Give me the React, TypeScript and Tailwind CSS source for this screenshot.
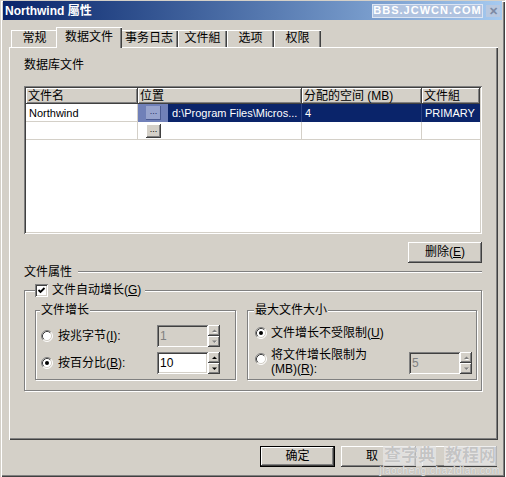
import React from 'react';

const font = "font-['Liberation_Sans','Noto_Sans_CJK_SC',sans-serif]";
const raised =
  'bg-[#d4d0c8] shadow-[inset_-1px_-1px_0_#404040,inset_1px_1px_0_#ffffff,inset_-2px_-2px_0_#808080,inset_2px_2px_0_#d4d0c8]';
const sunken =
  'shadow-[inset_1px_1px_0_#808080,inset_-1px_-1px_0_#ffffff,inset_2px_2px_0_#404040,inset_-2px_-2px_0_#d4d0c8]';
const etched = 'border border-[#808080] shadow-[inset_1px_1px_0_#ffffff,1px_1px_0_#ffffff]';

function Radio({ checked }: { checked?: boolean }) {
  return (
    <svg width="12" height="12" viewBox="0 0 12 12" className="shrink-0">
      <circle cx="6" cy="6" r="5" fill="#ffffff" />
      <path d="M2.11 9.89A5.5 5.5 0 0 1 9.89 2.11" stroke="#808080" fill="none" />
      <path d="M9.89 2.11A5.5 5.5 0 0 1 2.11 9.89" stroke="#ffffff" fill="none" />
      <path d="M2.82 9.18A4.5 4.5 0 0 1 9.18 2.82" stroke="#404040" fill="none" />
      <path d="M9.18 2.82A4.5 4.5 0 0 1 2.82 9.18" stroke="#d4d0c8" fill="none" />
      {checked && <circle cx="6" cy="6" r="2" fill="#000000" />}
    </svg>
  );
}

function Checkbox() {
  return (
    <span className={`w-[13px] h-[13px] bg-white shrink-0 ${sunken}`}>
      <svg width="13" height="13" viewBox="0 0 13 13">
        <path d="M3.5 6 L5.5 8 L9.5 4" stroke="#000000" strokeWidth="1.8" fill="none" />
      </svg>
    </span>
  );
}

function SpinBtn({ up, disabled }: { up?: boolean; disabled?: boolean }) {
  const c = disabled ? '#808080' : '#000000';
  return (
    <div className={`h-[11px] flex items-center justify-center ${raised}`}>
      <svg width="5" height="4" viewBox="0 0 5 4">
        {disabled && <path d={up ? 'M1 4 L3 2 L5 4 Z' : 'M1 1 L5 1 L3 3 Z'} fill="#ffffff" />}
        <path d={up ? 'M0 3 L2.5 0.5 L5 3 Z' : 'M0 0.5 L5 0.5 L2.5 3 Z'} fill={c} />
      </svg>
    </div>
  );
}

function Spin({ value, disabled }: { value: string; disabled?: boolean }) {
  return (
    <div className="flex h-[22px] w-[63px] shrink-0">
      <div
        className={`w-[51px] h-full ${sunken} ${disabled ? 'bg-[#d4d0c8] text-[#808080]' : 'bg-white text-black'} pl-[3px] text-[12px] leading-[22px]`}
      >
        {value}
      </div>
      <div className="flex flex-col w-[12px]">
        <SpinBtn up disabled={disabled} />
        <SpinBtn disabled={disabled} />
      </div>
    </div>
  );
}

function Tab({ label, w, active }: { label: string; w: string; active?: boolean }) {
  if (active) {
    return (
      <div
        className={`${w} h-[21px] -mx-[2px] -mb-[1px] relative z-10 bg-[#d4d0c8] text-center pt-[3px] leading-[14px] shadow-[inset_1px_1px_0_#ffffff,inset_-1px_0_0_#404040,inset_-2px_0_0_#808080]`}
      >
        {label}
      </div>
    );
  }
  return (
    <div
      className={`${w} h-[17px] bg-[#d4d0c8] text-center pt-[1px] leading-[14px] shadow-[inset_1px_1px_0_#ffffff,inset_-1px_0_0_#404040,inset_-2px_0_0_#808080]`}
    >
      {label}
    </div>
  );
}

function GridBtn() {
  return (
    <div className={`w-[15px] h-[14px] ${raised} text-[9px] leading-[10px] text-center text-black`}>...</div>
  );
}

export default function App() {
  return (
    <div className={`${font} text-[12px] text-black w-[505px] h-[477px] relative bg-[#d4d0c8] pt-[1px] px-[3px] shadow-[inset_1px_1px_0_#d4d0c8,inset_2px_2px_0_#ffffff,inset_-1px_-1px_0_#404040,inset_-2px_-2px_0_#808080]`}>
      {/* title bar */}
      <div className="h-[19px] bg-linear-to-r from-[#0a246a] to-[#a6caf0] flex items-center pl-[2px] pr-[2px]">
        <span className="text-white font-bold text-[12px] leading-[14px]">Northwind 屬性</span>
        <div className="ml-auto flex items-center gap-[3px]">
          <div className="h-[14px] w-[111px] bg-[#b0c3e0] border border-[#dce5f3] flex items-center justify-center">
            <span className="text-white font-bold text-[11px] tracking-[1px] leading-[11px]">BBS.JCWCN.COM</span>
          </div>
          <div className="w-[14px] h-[12px] bg-[#b8c8e0] flex items-center justify-center text-[#7c8aa4] text-[11px] leading-[12px] font-bold">
            ✕
          </div>
        </div>
      </div>

      <div className="ml-[6px] mt-[7px] w-[489px]">
        {/* tabs */}
        <div className="flex items-end h-[20px] pl-[2px] relative z-10">
          <Tab label="常规" w="w-[47px]" />
          <Tab label="数据文件" w="w-[66px]" active />
          <Tab label="事务日志" w="w-[58px]" />
          <Tab label="文件組" w="w-[49px]" />
          <Tab label="选项" w="w-[47px]" />
          <Tab label="权限" w="w-[47px]" />
        </div>

        {/* panel */}
        <div className="h-[393px] bg-[#d4d0c8] pl-[15px] pt-[11px] shadow-[inset_1px_1px_0_#ffffff,inset_-1px_-1px_0_#404040,inset_-2px_-2px_0_#808080] flex flex-col w-[489px]">
          <div className="leading-[14px] h-[14px]">数据库文件</div>

          {/* list */}
          <div className={`mt-[14px] w-[458px] h-[148px] bg-white p-[2px] ${sunken}`}>
            <div className="flex h-[16px] leading-[16px]">
              {[
                ['文件名', 'w-[112px]'],
                ['位置', 'w-[164px]'],
                ['分配的空间 (MB)', 'w-[120px]'],
                ['文件組', 'flex-1'],
              ].map(([t, w]) => (
                <div key={t} className={`${w} pl-[2px] ${raised} overflow-hidden whitespace-nowrap`}>
                  {t}
                </div>
              ))}
            </div>
            <div className="flex h-[18px] text-[11px] leading-[18px]">
              <div className="w-[112px] pl-[3px] border-r border-b border-[#d4d0c8]">Northwind</div>
              <div className="w-[164px] flex bg-[#0a246a] text-white border-r border-[#2c4282]">
                <div className="w-[30px] bg-[#7080b8] pl-[8px] pt-[2px]">
                  <div className="w-[15px] h-[14px] bg-[#97a3cd] shadow-[inset_-1px_-1px_0_#4a5a92] text-[9px] leading-[10px] text-center text-[#1c2c66]">...</div>
                </div>
                <span className="pl-[4px] whitespace-nowrap">d:\Program Files\Micros...</span>
              </div>
              <div className="w-[120px] pl-[3px] bg-[#0a246a] text-white border-r border-[#2c4282]">4</div>
              <div className="flex-1 pl-[3px] bg-[#0a246a] text-white">PRIMARY</div>
            </div>
            <div className="flex h-[18px] text-[11px] leading-[18px]">
              <div className="w-[112px] border-r border-b border-[#d4d0c8]"></div>
              <div className="w-[164px] border-r border-b border-[#d4d0c8] pl-[8px] pt-[2px]">
                <GridBtn />
              </div>
              <div className="w-[120px] border-r border-b border-[#d4d0c8]"></div>
              <div className="flex-1 border-b border-[#d4d0c8]"></div>
            </div>
          </div>

          <div className="w-[458px] flex justify-end mt-[8px]">
            <div className={`w-[74px] h-[21px] ${raised} text-center leading-[21px]`}>
              删除(<span className="underline">E</span>)
            </div>
          </div>

          {/* file properties */}
          <div className="w-[458px] mt-[2px] h-[14px] flex items-center">
            <span className="leading-[14px]">文件属性</span>
            <div className="flex-1 ml-[6px] h-[2px] border-t border-[#808080] border-b border-b-white"></div>
          </div>

          <div className={`relative mt-[11px] w-[458px] h-[101px] ${etched} pt-[19px] pl-[10px] flex gap-[11px]`}>
            <div className="absolute left-[10px] -top-[8px] h-[14px] flex items-center gap-[4px] bg-[#d4d0c8] pr-[4px]">
              <Checkbox />
              <span className="leading-[14px]">
                文件自动增长(<span className="underline">G</span>)
              </span>
            </div>

            {/* growth */}
            <div className={`relative w-[201px] h-[70px] ${etched} pt-[14px] pl-[5px]`}>
              <span className="absolute left-[4px] -top-[8px] bg-[#d4d0c8] px-[1px] leading-[14px]">文件增长</span>
              <div className="flex items-center h-[22px]">
                <div className="w-[116px] flex items-center gap-[5px]">
                  <Radio />
                  <span className="leading-[14px]">
                    按兆字节(<span className="underline">I</span>):
                  </span>
                </div>
                <Spin value="1" disabled />
              </div>
              <div className="flex items-center h-[22px] mt-[5px]">
                <div className="w-[116px] flex items-center gap-[5px]">
                  <Radio checked />
                  <span className="leading-[14px]">
                    按百分比(<span className="underline">B</span>):
                  </span>
                </div>
                <Spin value="10" />
              </div>
            </div>

            {/* max size */}
            <div className={`relative w-[230px] h-[70px] ${etched} pt-[14px] pl-[7px] pr-[4px]`}>
              <span className="absolute left-[6px] -top-[8px] bg-[#d4d0c8] px-[1px] leading-[14px]">最大文件大小</span>
              <div className="flex items-center h-[16px] gap-[4px]">
                <Radio checked />
                <span className="leading-[14px]">
                  文件增长不受限制(<span className="underline">U</span>)
                </span>
              </div>
              <div className="flex items-start mt-[7px]">
                <div className="mt-[5px]">
                  <Radio />
                </div>
                <span className="leading-[14px] ml-[4px]">
                  将文件增长限制为
                  <br />
                  (MB)(<span className="underline">R</span>):
                </span>
                <div className="ml-auto mt-[4px]">
                  <Spin value="5" disabled />
                </div>
              </div>
            </div>
          </div>
        </div>

        {/* dialog buttons */}
        <div className="flex justify-end gap-[6px] mt-[6px] pr-[1px]">
          <div className="w-[75px] h-[21px] border border-black">
            <div className={`w-full h-full ${raised} text-center leading-[19px]`}>确定</div>
          </div>
          <div className={`w-[75px] h-[21px] ${raised} pl-[25px] leading-[21px]`}>取</div>
          <div className={`w-[75px] h-[21px] ${raised}`}></div>
        </div>
      </div>

      {/* watermark over the buttons */}
      <div className="absolute left-[380px] top-[446px] w-[120px] flex flex-col items-center pointer-events-none">
        <div className="flex gap-[8px] text-[17px] leading-[20px] font-bold text-[#c4c4c4] [text-shadow:0_0_1px_#ffffff]">
          <span className="bg-[#e6e6e6]/70 px-[1px]">查字典</span>
          <span className="bg-[#e6e6e6]/70 px-[1px]">教程网</span>
        </div>
        <span className="text-[10px] leading-[10px] text-[#e8e8e8] tracking-[0.5px] [text-shadow:0_0_1px_#9a9a9a]">jiaocheng.chazidian.com</span>
      </div>
    </div>
  );
}
